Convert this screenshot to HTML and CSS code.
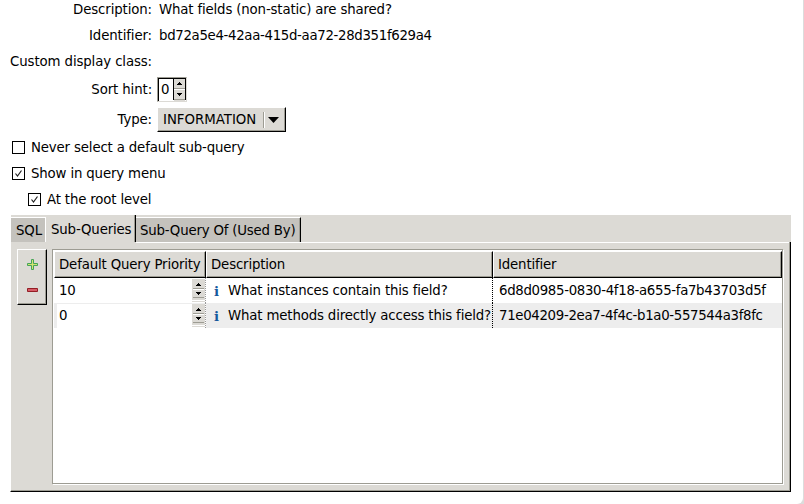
FILE: index.html
```
<!DOCTYPE html>
<html lang="en">
<head>
<meta charset="utf-8">
<title>Query editor</title>
<link rel="stylesheet" href="styles.css">
</head>
<body>
<main class="dialog">
  <div class="form">
    <div class="label">Description:</div><div class="value">What fields (non-static) are shared?</div>
    <div class="label">Identifier:</div><div class="value uuid">bd72a5e4-42aa-415d-aa72-28d351f629a4</div>
    <div class="label">Custom display class:</div><div class="value"></div>
    <div class="label">Sort hint:</div>
    <div class="value"><div class="spinner"><span class="spin-value">0</span><svg class="spin-buttons" width="13" height="23" viewBox="0 0 13 23" shape-rendering="crispEdges"><path fill="#dcdad5" d="M1 0h11v23H1z"/><path fill="#000" d="M0 0h13v1H0zM0 0h1v22H0zM12 0h1v22h-1zM6 4h1v1h1v1h1v1H4V6h1V5h1zM4 15h5v1H8v1H7v1H6v-1H5v-1H4z"/><path fill="#9d9c93" d="M1 10h11v1H1zM1 21h11v1H1z"/><path fill="#fff" d="M1 11h11v1H1z"/></svg></div></div>
    <div class="label">Type:</div>
    <div class="value"><div class="combo"><span class="combo-text">INFORMATION</span><span class="combo-sep"></span><svg width="11" height="6" viewBox="0 0 11 6"><path d="M0 0h11L5.5 6z"/></svg></div></div>
  </div>
  <div class="checks">
    <div class="check"><span class="box"></span><span>Never select a default sub-query</span></div>
    <div class="check"><span class="box"><svg width="11" height="11" viewBox="0 0 11 11"><path d="M2.5 5.5 4.5 8 8.5 2.5"/></svg></span><span>Show in query menu</span></div>
    <div class="check nested"><span class="box"><svg width="11" height="11" viewBox="0 0 11 11"><path d="M2.5 5.5 4.5 8 8.5 2.5"/></svg></span><span>At the root level</span></div>
  </div>
  <section class="notebook">
    <nav class="tabs"><div class="tab first">SQL</div><div class="tab active">Sub-Queries</div><div class="tab last">Sub-Query Of (Used By)</div></nav>
    <div class="panel">
      <div class="tools">
        <svg width="12" height="12" viewBox="0 0 12 12"><path class="plus" d="M4.5.5h2v4h4v2h-4v4h-2v-4h-4v-2h4z"/></svg>
        <svg width="12" height="12" viewBox="0 0 12 12"><path class="minus" d="M.5 4.5h10v3H.5z"/></svg>
      </div>
      <div class="table">
        <div class="row head"><div class="th">Default Query Priority</div><div class="th">Description</div><div class="th">Identifier</div></div>
        <div class="row">
          <div class="cell priority"><span>10</span><svg width="13" height="23" viewBox="0 0 13 23" shape-rendering="crispEdges"><path fill="#dcdad5" d="M0 0h13v23H0z"/><path fill="#000" d="M6 4h1v1h1v1h1v1H4V6h1V5h1zM4 13h5v1H8v1H7v1H6v-1H5v-1H4z"/><path fill="#9d9c93" d="M1 9h11v1H1zM1 18h11v1H1z"/><path fill="#fff" d="M1 10h11v1H1zM0 21h13v1H0z"/></svg></div>
          <div class="cell description"><b class="info">i</b><span>What instances contain this field?</span></div>
          <div class="cell identifier uuid">6d8d0985-0830-4f18-a655-fa7b43703d5f</div>
        </div>
        <div class="row alt">
          <div class="cell priority"><span>0</span><svg width="13" height="23" viewBox="0 0 13 23" shape-rendering="crispEdges"><path fill="#dcdad5" d="M0 0h13v23H0z"/><path fill="#000" d="M6 4h1v1h1v1h1v1H4V6h1V5h1zM4 13h5v1H8v1H7v1H6v-1H5v-1H4z"/><path fill="#9d9c93" d="M1 9h11v1H1zM1 18h11v1H1z"/><path fill="#fff" d="M1 10h11v1H1zM0 21h13v1H0z"/></svg></div>
          <div class="cell description"><b class="info">i</b><span>What methods directly access this field?</span></div>
          <div class="cell identifier uuid">71e04209-2ea7-4f4c-b1a0-557544a3f8fc</div>
        </div>
      </div>
    </div>
  </section>
</main>
</body>
</html>
```
FILE: styles.css
```
* { box-sizing: border-box; }
body { margin: 0; background: #dcdcdc; color: #000; font: 13.33px/16px "DejaVu Sans", sans-serif; letter-spacing: -0.16px; white-space: nowrap; overflow: hidden; }
svg { flex-shrink: 0; }
.dialog { width: 803px; height: 504px; padding: 0 12px 0 10px; background: #fff; border-bottom-right-radius: 6px; overflow: hidden; }
.form { display: grid; grid-template-columns: 142px 1fr; grid-template-rows: 26px 26px 26px 30px 30px; column-gap: 5px; align-items: center; margin-top: -3px; }
.label { justify-self: end; letter-spacing: -0.12px; }
.value { padding-left: 2px; }
.uuid { letter-spacing: -0.33px; }
.spinner { display: flex; width: 30px; height: 25px; border: 1px solid #9d9c93; border-right-color: #dcdad5; border-bottom-color: #dcdad5; margin: 0 0 1px -2px; }
.spin-value { width: 15px; border-top: 1px solid #000; border-left: 1px solid #000; padding: 3px 0 0 2px; }
.combo { display: flex; align-items: center; width: 129px; height: 25px; margin: 0 0 1px -2px; padding-left: 5px; background: #dcdad5; border: 1px solid #fff; border-right-color: #000; border-bottom-color: #000; box-shadow: inset -1px -1px #9d9c93; }
.combo-text { width: 100px; letter-spacing: -0.02px; }
.combo-sep { width: 2px; height: 16px; background: #fff; border-left: 1px solid #9d9c93; margin-right: 3px; }
.checks { display: grid; grid-auto-rows: 26px; padding-left: 2px; }
.check { display: flex; align-items: center; gap: 6px; }
.nested { padding-left: 16px; }
.box { width: 13px; height: 13px; margin-bottom: 1px; border: 1px solid #000; }
.box svg { display: block; fill: none; stroke: #222; stroke-width: 1.2; }
.notebook { margin-top: 2px; }
.tabs { display: flex; height: 27px; background: #dcdad5; border-left: 1px solid #fff; }
.tab { padding-top: 5px; height: 25px; margin-top: 2px; background: #c4c2bd; border-top: 1px solid #fff; }
.first { width: 35px; padding-left: 5px; border-right: 1px solid #fff; }
.active { width: 90px; height: 27px; margin-top: 0; padding: 6px 0 0 5px; background: #dcdad5; border-top: 0; padding-top: 7px; border-right: 1px solid #000; box-shadow: inset -1px 0 #9d9c93; }
.last { width: 165px; padding-left: 4px; border-right: 1px solid #000; box-shadow: inset -1px 0 #9d9c93; letter-spacing: -0.2px; }
.panel { display: flex; gap: 5px; height: 250px; padding: 7px 8px 7px 6px; background: linear-gradient(#fff, #fff) 125px 0 / 653px 1px no-repeat #dcdad5; border-left: 1px solid #fff; border-right: 1px solid #000; border-bottom: 1px solid #000; box-shadow: inset -1px -1px #9d9c93; }
.tools { display: flex; flex: none; flex-direction: column; align-items: center; gap: 13px; width: 30px; height: 56px; padding: 9px 0 0 1px; border: 1px solid #fff; border-right-color: #000; border-bottom-color: #000; box-shadow: inset -1px -1px #9d9c93; }
.plus { fill: #d5e373; stroke: #45a557; }
.minus { fill: #d65b65; stroke: #941e25; }
.table { flex: none; width: 731px; height: 235px; padding: 1px 0 0 1px; background: #fff; border: 1px solid #9d9c93; box-shadow: 1px 1px #fff; }
.row { display: grid; grid-template-columns: 152px 287px 289px; height: 25px; }
.head { height: 27px; }
.th { padding: 5px 0 0 4px; background: #dcdad5; border: 1px solid #fff; border-right-color: #000; border-bottom-color: #000; box-shadow: inset -1px -1px #9d9c93; }
.cell { display: flex; align-items: center; }
.priority { margin-left: 3px; padding-left: 2px; justify-content: space-between; background: #fff; border-right: 1px dotted #999; }
.alt { background: #ededed; }
.alt .priority { box-shadow: inset 0 1px #ededed; }
.description { padding-left: 8px; border-right: 1px dotted #000; }
.info { width: 14px; flex: none; color: #155a9c; font-family: "DejaVu Serif", serif; font-size: 13.33px; }
.identifier { padding-left: 6px; }
```
